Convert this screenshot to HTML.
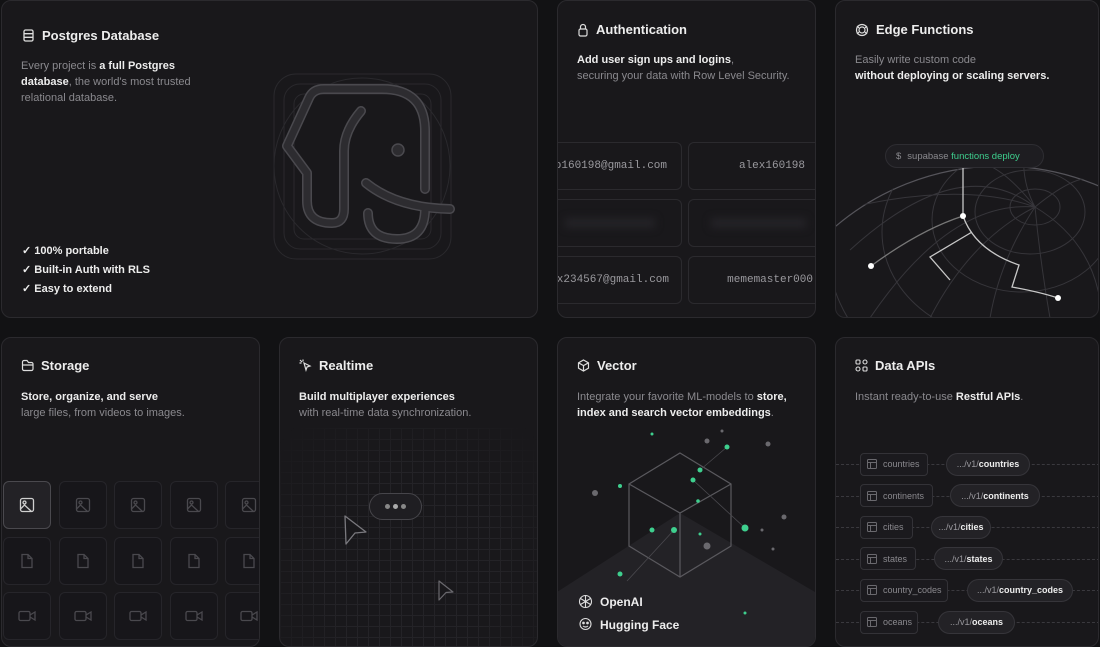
<!DOCTYPE html>
<html><head><meta charset="utf-8"><style>
*{margin:0;padding:0;box-sizing:border-box}
body{width:1100px;height:634px;background:#121214;font-family:"Liberation Sans",sans-serif;position:relative;overflow:hidden;color:#ededed}
.card{position:absolute;background:#19181b;border:1px solid #2b2a2e;border-radius:10px;overflow:hidden}
.t{position:absolute;font-size:13px;font-weight:bold;color:#ededed;display:flex;align-items:center;gap:7px}
.d{position:absolute;font-size:11px;line-height:16px;color:#8a898e}
.d b{color:#ededed}
.chk{position:absolute;font-size:11px;font-weight:bold;color:#ededed;line-height:19px}
.cell{position:absolute;border:1px solid #2b2a2e;border-radius:6px;height:48px;font-family:"Liberation Mono",monospace;font-size:11px;color:#9a999e;display:flex;align-items:center}
.tile{position:absolute;width:48px;height:48px;border:1px solid #26252a;border-radius:6px;background:#17161a;display:flex;align-items:center;justify-content:center}
.row{position:absolute;left:0;width:264px;height:1px;border-top:1px dashed #3a393e}
.tag{position:absolute;height:23px;border:1px solid #333237;border-radius:4px;background:#1b1a1e;font-size:9px;color:#8a898e;display:flex;align-items:center;padding:0 6px;gap:6px;white-space:nowrap}
.tag svg{flex-shrink:0}
.pill{position:absolute;height:23px;border:1px solid #36353a;border-radius:12px;background:#232226;font-size:9px;color:#9a999e;display:flex;align-items:center;justify-content:center;white-space:nowrap}
.pill b{color:#ededed}
</style></head><body>

<!-- Postgres -->
<div class="card" style="left:1px;top:0;width:537px;height:318px">
 <div class="t" style="left:20px;top:27px"><svg width="13" height="13" viewBox="0 0 13 13" fill="none" stroke="#ddd" stroke-width="1.3"><rect x="2" y="1" width="9" height="11" rx="1.5"/><path d="M2 4.7h9M2 8.3h9"/></svg>Postgres Database</div>
 <div class="d" style="left:19px;top:57px;width:190px">Every project is <b>a full Postgres database</b>, the world's most trusted relational database.</div>
 <svg style="position:absolute;left:270px;top:70px" width="220" height="200" viewBox="270 70 220 200" fill="none">
  <g stroke="#2a292d" stroke-width="1">
   <rect x="272" y="73" width="177" height="185" rx="22"/>
   <rect x="282" y="83" width="157" height="165" rx="16"/>
   <circle cx="360" cy="165" r="88"/>
   <rect x="292" y="93" width="137" height="145" rx="10"/>
  </g>
  <g stroke-linecap="round" stroke-linejoin="round" fill="none">
   <path d="M359 110 Q342 130 342 150 L342 208 Q342 222 330 222 Q305 222 305 200 L305 172 L285 145 L307 97 Q311 88 322 88 L380 88 Q423 88 423 130 L423 188 M364 182 Q395 207 448 208 M366 212 Q366 238 395 238 Q423 238 423 208" stroke="#4a494e" stroke-width="10"/>
   <path d="M359 110 Q342 130 342 150 L342 208 Q342 222 330 222 Q305 222 305 200 L305 172 L285 145 L307 97 Q311 88 322 88 L380 88 Q423 88 423 130 L423 188 M364 182 Q395 207 448 208 M366 212 Q366 238 395 238 Q423 238 423 208" stroke="#2d2c30" stroke-width="7"/>
  </g>
  <circle cx="396" cy="149" r="6" fill="#2d2c30" stroke="#4a494e" stroke-width="1.5"/>
 </svg>
 <div class="chk" style="left:20px;top:241px">✓ 100% portable<br>✓ Built-in Auth with RLS<br>✓ Easy to extend</div>
</div>

<!-- Auth -->
<div class="card" style="left:557px;top:0;width:259px;height:318px">
 <div class="t" style="left:19px;top:21px"><svg width="12" height="14" viewBox="0 0 12 14" fill="none" stroke="#ddd" stroke-width="1.2"><path d="M3.5 6V4a2.5 2.5 0 0 1 5 0v2"/><rect x="2" y="6" width="8" height="7" rx="1.5"/></svg>Authentication</div>
 <div class="d" style="left:19px;top:51px;width:235px"><b>Add user sign ups and logins</b>,<br>securing your data with Row Level Security.</div>
 <div class="cell" style="left:-10px;top:141px;width:134px;justify-content:flex-end;padding-right:14px">o160198@gmail.com</div>
 <div class="cell" style="left:130px;top:141px;width:140px;justify-content:flex-end;padding-right:22px">alex160198</div>
 <div class="cell" style="left:-10px;top:198px;width:134px"><div style="margin-left:16px;width:90px;height:10px;background:#242327;filter:blur(4px)"></div></div>
 <div class="cell" style="left:130px;top:198px;width:140px"><div style="margin-left:22px;width:95px;height:10px;background:#242327;filter:blur(4px)"></div></div>
 <div class="cell" style="left:-10px;top:255px;width:134px;justify-content:flex-end;padding-right:12px">x234567@gmail.com</div>
 <div class="cell" style="left:130px;top:255px;width:140px;justify-content:flex-end;padding-right:14px">mememaster000</div>
</div>

<!-- Edge -->
<div class="card" style="left:835px;top:0;width:264px;height:318px">
 <div class="t" style="left:19px;top:21px"><svg width="14" height="14" viewBox="0 0 14 14" fill="none" stroke="#ddd" stroke-width="1.2"><circle cx="7" cy="7" r="5.5"/><circle cx="7" cy="7" r="3"/><path d="M2 3l2 2M12 3l-2 2M2 11l2-2M12 11l-2-2"/></svg>Edge Functions</div>
 <div class="d" style="left:19px;top:51px;width:240px">Easily write custom code<br><b>without deploying or scaling servers.</b></div>
 <svg style="position:absolute;left:-1px;top:-1px" width="264" height="318" viewBox="835 0 264 318">
  <defs><clipPath id="gc"><circle cx="1000" cy="420" r="255"/></clipPath></defs>
  <g clip-path="url(#gc)">
  <circle cx="1000" cy="420" r="254" fill="none" stroke="#55545a" stroke-width="1.2"/>
  <g fill="none" stroke="#36353a" stroke-width="1">
   <ellipse cx="1035" cy="207" rx="25" ry="18"/>
   <ellipse cx="1030" cy="212" rx="55" ry="42"/>
   <ellipse cx="1022" cy="220" rx="90" ry="72"/>
   <ellipse cx="1012" cy="232" rx="130" ry="108"/>
   <ellipse cx="1000" cy="248" rx="172" ry="150"/>
   <ellipse cx="990" cy="262" rx="210" ry="188"/>
   <path d="M1035 207 Q960 150 850 250 M1035 207 Q950 200 870 318 M1035 207 Q970 240 930 318 M1035 207 Q1000 260 990 318 M1035 207 Q1040 260 1050 318 M1035 207 Q1090 240 1100 300 M1035 207 Q1080 170 1100 180 M1035 207 Q1010 160 1040 100 M1035 207 Q990 150 960 165 M1035 207 Q960 180 840 210"/>
  </g>
  </g>
  <g fill="none" stroke="#c8c8c8" stroke-width="1.3">
   <path d="M963 168 L963 216 Q975 250 1019 265 L1012 287 Q1040 292 1058 298"/>
   <path d="M972 232 L930 257 L950 280"/>
   <path d="M871 266 Q920 230 963 216" stroke="#777"/>
  </g>
  <g fill="#fff"><circle cx="963" cy="216" r="3"/><circle cx="871" cy="266" r="3"/><circle cx="1058" cy="298" r="3"/></g>
 </svg>
 <div style="position:absolute;left:49px;top:143px;width:159px;height:24px;border:1px solid #2e2d32;border-radius:12px;background:#1e1d21;font-size:9.5px;color:#8a898e;display:flex;align-items:center;padding-left:10px"><span style="margin-right:6px">$</span>supabase&nbsp;<span style="color:#3ecf8e">functions deploy</span></div>
</div>

<!-- Storage -->
<div class="card" style="left:1px;top:337px;width:259px;height:310px">
 <div class="t" style="left:19px;top:20px"><svg width="13" height="13" viewBox="0 0 13 13" fill="none" stroke="#ddd" stroke-width="1.2"><path d="M1.5 6V3a1.5 1.5 0 0 1 1.5-1.5h3l1.5 2h3a1.5 1.5 0 0 1 1.5 1.5V10a1.5 1.5 0 0 1-1.5 1.5H3A1.5 1.5 0 0 1 1.5 10z M1.5 6h10"/></svg>Storage</div>
 <div class="d" style="left:19px;top:51px;width:235px"><b>Store, organize, and serve</b><br>large files, from videos to images.</div>
 <div id="tiles"></div>
</div>

<!-- Realtime -->
<div class="card" style="left:279px;top:337px;width:259px;height:310px">
 <div style="position:absolute;left:0;top:90px;width:259px;height:230px;background-image:linear-gradient(#242327 1px,transparent 1px),linear-gradient(90deg,#242327 1px,transparent 1px);background-size:11px 11px;-webkit-mask-image:radial-gradient(ellipse at 50% 60%,#000 50%,transparent 95%);mask-image:radial-gradient(ellipse at 50% 60%,#000 50%,transparent 95%)"></div>
 <div class="t" style="left:19px;top:20px"><svg width="13" height="13" viewBox="0 0 13 13" fill="none" stroke="#ddd" stroke-width="1.2"><path d="M5 4l6 3-3 1-1 3z M1 1l2 2M4 0.5v2M0.5 4h2"/></svg>Realtime</div>
 <div class="d" style="left:19px;top:51px;width:235px"><b>Build multiplayer experiences</b><br>with real-time data synchronization.</div>
 <div style="position:absolute;left:89px;top:155px;width:53px;height:27px;border:1px solid #46454a;border-radius:14px;background:#1f1e22;display:flex;align-items:center;justify-content:center;gap:3px"><i style="width:5px;height:5px;border-radius:50%;background:#888"></i><i style="width:5px;height:5px;border-radius:50%;background:#aaa"></i><i style="width:5px;height:5px;border-radius:50%;background:#888"></i></div>
 <svg style="position:absolute;left:63px;top:176px" width="26" height="32" viewBox="0 0 26 32"><path d="M2 2 L23 18 L12 19 L3 30 Z" fill="#19181b" stroke="#7a797e" stroke-width="1.3" stroke-linejoin="round"/></svg>
 <svg style="position:absolute;left:157px;top:241px" width="18" height="22" viewBox="0 0 18 22"><path d="M2 2 L16 13 L9 13.5 L2 21 Z" fill="#19181b" stroke="#6a696e" stroke-width="1.2" stroke-linejoin="round"/></svg>
</div>

<!-- Vector -->
<div class="card" style="left:557px;top:337px;width:259px;height:310px">
 <div class="t" style="left:19px;top:20px"><svg width="13" height="13" viewBox="0 0 13 13" fill="none" stroke="#ddd" stroke-width="1.2"><path d="M6.5 1l5 2.8v5.4l-5 2.8-5-2.8V3.8z M1.5 3.8l5 2.8 5-2.8 M6.5 6.6V12"/></svg>Vector</div>
 <div class="d" style="left:19px;top:51px;width:230px">Integrate your favorite ML-models to <b>store, index and search vector embeddings</b>.</div>
 <svg style="position:absolute;left:-1px;top:-338px" width="259" height="650" viewBox="557 0 259 650">
  <path d="M557 592 L680 513 L815 592 L815 650 L557 650Z" fill="#232226"/>
  <g fill="none" stroke="#5a595e" stroke-width="1.2">
   <path d="M680 453 L731 484 L731 546 L680 577 L629 546 L629 484 Z M629 484 L680 513 L731 484 M680 513 L680 577"/>
  </g>
  <g stroke="#4a494e" stroke-width="0.8"><path d="M627 581 L674 530 M693 480 L745 528 M700 470 L727 447"/></g>
  <g fill="#3ecf8e"><circle cx="727" cy="447" r="2.5"/><circle cx="700" cy="470" r="2.5"/><circle cx="693" cy="480" r="2.5"/><circle cx="698" cy="501" r="1.8"/><circle cx="652" cy="530" r="2.5"/><circle cx="674" cy="530" r="3"/><circle cx="745" cy="528" r="3.5"/><circle cx="700" cy="534" r="1.5"/><circle cx="620" cy="574" r="2.5"/><circle cx="620" cy="486" r="2"/><circle cx="652" cy="434" r="1.5"/><circle cx="745" cy="613" r="1.5"/></g>
  <g fill="#6a696e"><circle cx="707" cy="546" r="3.5"/><circle cx="595" cy="493" r="3"/><circle cx="707" cy="441" r="2.5"/><circle cx="768" cy="444" r="2.5"/><circle cx="784" cy="517" r="2.5"/><circle cx="762" cy="530" r="1.5"/><circle cx="773" cy="549" r="1.5"/><circle cx="722" cy="431" r="1.5"/></g>
 </svg>
 <div class="t" style="left:20px;top:256px;font-size:12px"><svg width="15" height="15" viewBox="0 0 15 15" fill="none" stroke="#ddd" stroke-width="1.1"><circle cx="7.5" cy="7.5" r="6"/><path d="M7.5 1.5v12M2.5 4.5l10 6M2.5 10.5l10-6"/></svg>OpenAI</div>
 <div class="t" style="left:20px;top:279px;font-size:12px"><svg width="15" height="15" viewBox="0 0 15 15" fill="none" stroke="#ddd" stroke-width="1.1"><circle cx="7.5" cy="7" r="5.5"/><circle cx="5.5" cy="6" r=".8" fill="#ddd"/><circle cx="9.5" cy="6" r=".8" fill="#ddd"/><path d="M5 9q2.5 2 5 0"/></svg>Hugging Face</div>
</div>

<!-- Data APIs -->
<div class="card" style="left:835px;top:337px;width:264px;height:310px">
 <div class="t" style="left:19px;top:20px"><svg width="13" height="13" viewBox="0 0 13 13" fill="none" stroke="#ddd" stroke-width="1.1"><rect x="1" y="1" width="4" height="4" rx="1"/><rect x="8" y="1" width="4" height="4" rx="2"/><rect x="1" y="8" width="4" height="4" rx="2"/><rect x="8" y="8" width="4" height="4" rx="1"/></svg>Data APIs</div>
 <div class="d" style="left:19px;top:51px;width:240px">Instant ready-to-use <b>Restful APIs</b>.</div>
 <div id="api"></div>
</div>

<script>
var t='',imgs='<svg width="16" height="16" viewBox="0 0 16 16" fill="none" stroke="C" stroke-width="1.3"><rect x="1.5" y="1.5" width="13" height="13" rx="2"/><circle cx="5.5" cy="5.5" r="1.5"/><path d="M1.5 12l4-4 7 6.5"/></svg>',
doc='<svg width="14" height="16" viewBox="0 0 14 16" fill="none" stroke="#4a494e" stroke-width="1.3"><path d="M2 1.5h6l4 4v9H2z M8 1.5v4h4"/></svg>',
vid='<svg width="18" height="14" viewBox="0 0 18 14" fill="none" stroke="#4a494e" stroke-width="1.3"><rect x="1" y="2.5" width="11" height="9" rx="1.5"/><path d="M12 6l5-3v8l-5-3"/></svg>';
for(var c=0;c<5;c++){var x=1+c*55.5;
t+='<div class="tile" style="left:'+x+'px;top:143px;'+(c==0?'background:#232226;border-color:#4a494e':'')+'">'+imgs.replace('C',c==0?'#d0d0d0':'#4a494e')+'</div>';
t+='<div class="tile" style="left:'+x+'px;top:199px">'+doc+'</div>';
t+='<div class="tile" style="left:'+x+'px;top:254px">'+vid+'</div>';}
document.getElementById('tiles').innerHTML=t;
var rows=[['countries',68,110,84],['continents',73,114,90],['cities',53,95,60],['states',56,98,69],['country_codes',88,131,106],['oceans',58,102,77]],a='',ti='<svg width="10" height="10" viewBox="0 0 10 10" fill="none" stroke="#6a696e" stroke-width="1"><rect x=".5" y=".5" width="9" height="9" rx="1"/><path d="M.5 3.5h9M3.5 3.5v6"/></svg>';
rows.forEach(function(r,i){var y=126+i*31.6;
a+='<div class="row" style="top:'+y+'px"></div>';
a+='<div class="tag" style="left:24px;top:'+(y-11.5)+'px;width:'+r[1]+'px">'+ti+r[0]+'</div>';
a+='<div class="pill" style="left:'+r[2]+'px;top:'+(y-11.5)+'px;width:'+r[3]+'px">.../v1/<b>'+r[0]+'</b></div>';});
document.getElementById('api').innerHTML=a;
</script>
</body></html>
